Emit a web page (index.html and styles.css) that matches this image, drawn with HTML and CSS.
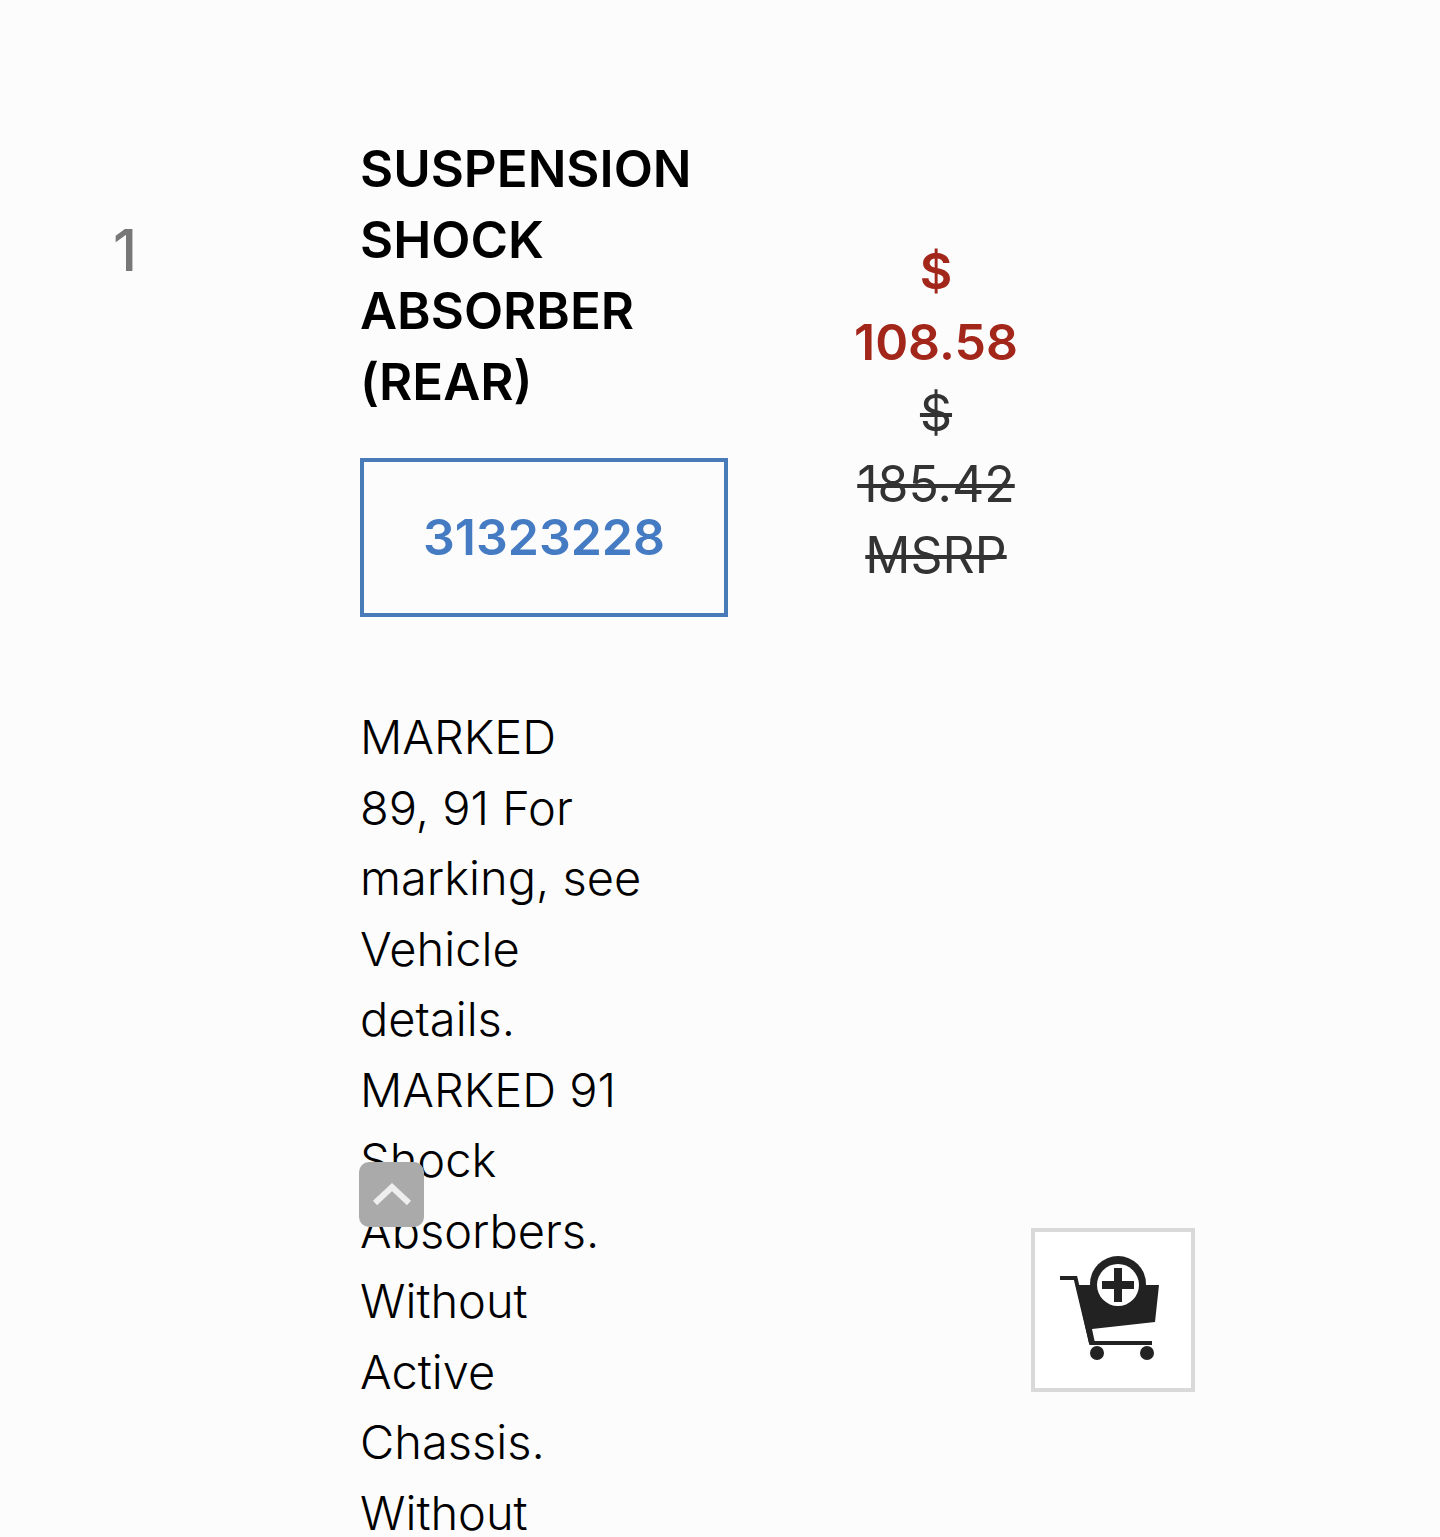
FILE: index.html
```html
<!DOCTYPE html>
<html lang="en">

<head>
    <meta charset="UTF-8">
    <meta name="viewport" content="width=device-width, initial-scale=1.0">
    <title>Suspension Shock Absorber (Rear)</title>
    <link rel="stylesheet" href="styles.css">
</head>

<body>
    <main class="part">
        <div class="qty">1</div>

        <div class="details">
            <h2 class="title">SUSPENSION SHOCK ABSORBER (REAR)</h2>
            <a class="part-number" href="#">31323228</a>
            <p class="notes">MARKED 89,&nbsp;91&nbsp;For marking, see Vehicle details. MARKED&nbsp;91 Shock Absorbers. Without Active Chassis. Without</p>
        </div>

        <div class="price">
            <div class="sale">$ 108.58</div>
            <del class="msrp">$ 185.42 MSRP</del>
        </div>

        <div class="cart">
            <button class="add" type="button" aria-label="Add to cart">
                <svg viewBox="0 0 110 108" width="110" height="108">
                    <path d="M2 22H17.500L33 87H94" fill="none" stroke="#222" stroke-width="4" />
                    <path d="M18 29H101L97 66L34 73L37 87H31Z" fill="#222" />
                    <circle cx="60" cy="28" r="28" fill="#222" />
                    <circle cx="60" cy="29" r="21" fill="#fff" />
                    <path d="M44 29H76M60 12V46" fill="none" stroke="#222" stroke-width="8" />
                    <circle cx="39" cy="97" r="7" fill="#222" />
                    <circle cx="89" cy="97" r="7" fill="#222" />
                </svg>
            </button>
        </div>
    </main>

    <button class="to-top" type="button" aria-label="Back to top">
        <svg viewBox="0 0 40 28" width="40" height="28">
            <path d="M3 22L20 6L37 22" fill="none" stroke="#eee" stroke-width="6" />
        </svg>
    </button>
</body>

</html>
```

FILE: styles.css
```css
* {
    box-sizing: border-box;
}

body {
    margin: 0;
    background-color: #fcfcfc;
    font-family: Inter, "Liberation Sans", sans-serif;
    color: #000;
}

.part {
    display: grid;
    grid-template-columns: 25fr 34fr 12fr 29fr;
}

.qty {
    padding-top: 215px;
    padding-right: 110px;
    font-size: 58px;
    font-weight: 500;
    line-height: 71px;
    text-align: center;
    color: #777;
}

.details {
    padding-top: 133px;
}

.title {
    max-width: 368px;
    margin: 0;
    font-size: 51px;
    font-weight: 600;
    line-height: 71px;
}

.part-number {
    display: block;
    width: 368px;
    margin-top: 41px;
    padding: 40px 0;
    border: 4px solid #487bb8;
    font-size: 50px;
    font-weight: 600;
    line-height: 71px;
    text-align: center;
    text-decoration: none;
    color: #457bc2;
}

.notes {
    max-width: 290px;
    margin: 85px 0 0;
    font-size: 47px;
    font-weight: 300;
    line-height: 1.5;
}

.price {
    padding-top: 236px;
    line-height: 71px;
    text-align: center;
}

.sale {
    font-size: 50px;
    font-weight: 600;
    color: #a3261b;
}

.msrp {
    display: block;
    font-size: 50px;
    text-decoration-thickness: 4px;
    color: #333;
}

.cart {
    padding-top: 1228px;
    padding-left: 9px;
}

.add {
    display: flex;
    align-items: center;
    justify-content: center;
    width: 164px;
    height: 164px;
    padding: 0;
    border: 4px solid #d9d9d9;
    background-color: #fff;
}

.to-top {
    position: fixed;
    left: 359px;
    bottom: 310px;
    display: flex;
    align-items: center;
    justify-content: center;
    width: 65px;
    height: 65px;
    padding: 0;
    border: 0;
    border-radius: 10px;
    background-color: #aaa;
}
```
